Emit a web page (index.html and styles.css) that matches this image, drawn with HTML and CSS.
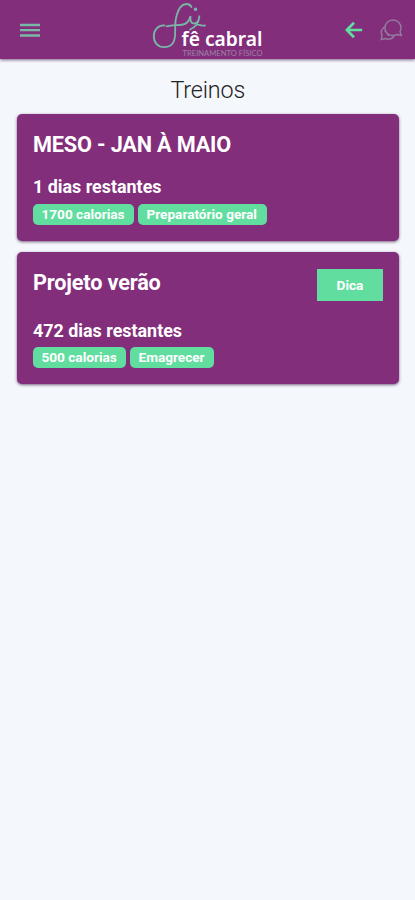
FILE: index.html
```html
<!DOCTYPE html>
<html lang="pt-BR">
<head>
<meta charset="utf-8">
<title>Treinos</title>
<link rel="stylesheet" href="styles.css">
</head>
<body>
<header class="topbar">
  <svg class="menu" viewBox="0 0 20 15"><path d="M0 2h20M0 7.2h20M0 12.5h20"/></svg>
  <svg class="logo" viewBox="0 0 125 59">
    <g class="logo-mark">
      <path d="M24.500 25.500C18 25 13.800 30 13.800 36C13.800 43 18 47.200 24 47.200C31.500 47.200 34.500 43 35 36C35.500 29 34.500 23 36.500 16C38.500 8 41.500 4 46.500 4C49 4 50.500 5 51.500 7"/>
      <path d="M26.500 26.300C32 24.800 38 25.500 43 24.500C48 23.500 49.500 20 50.500 16C50 21 51 23.500 54 23.500C57.500 23.500 59 20 59.500 15.500C59 22 56 27 50 29.500M56 25C59 23.500 61 26.300 65 25.500"/>
      <circle cx="55.500" cy="9.200" r=".9"/>
    </g>
    <text class="logo-name" x="41.500" y="46" textLength="81" lengthAdjust="spacingAndGlyphs">fê cabral</text>
    <text class="logo-tag" x="42.500" y="56.200" textLength="80" lengthAdjust="spacingAndGlyphs">TREINAMENTO FÍSICO</text>
  </svg>
  <div class="actions">
    <svg class="back" viewBox="0 0 18 18"><path d="M17.200 9H2M9 1.800L1.800 9L9 16.200"/></svg>
    <svg class="chat" viewBox="0 0 24 24"><path d="M14 2C9.500 2 6 5.500 6 10C6 14.500 9.500 17.500 14 17.500C15.500 17.500 17 17 18 16.500L22.300 17.500L21 13.500C21.700 12.500 22 11.500 22 10C22 5.500 18.500 2 14 2ZM6 8.500C2.500 11 1.500 14 3 17L2.300 21.500L6.500 20.500C10 22 13.500 20.500 15.500 17.500M5.500 12L10 18"/></svg>
  </div>
</header>
<main>
  <h1>Treinos</h1>
  <section class="card first">
    <h2>MESO - JAN À MAIO</h2>
    <p>1 dias restantes</p>
    <div class="badges"><span class="badge calories-long">1700 calorias</span><span class="badge general">Preparatório geral</span></div>
  </section>
  <section class="card second">
    <div class="card-head"><h2>Projeto verão</h2><button>Dica</button></div>
    <p>472 dias restantes</p>
    <div class="badges"><span class="badge calories-short">500 calorias</span><span class="badge slimming">Emagrecer</span></div>
  </section>
</main>
</body>
</html>
```
FILE: styles.css
```css
* { box-sizing: border-box; }
body {
  margin: 0;
  min-height: 900px;
  background: #f4f7fb;
  font-family: Roboto, sans-serif;
}
.topbar {
  display: grid;
  grid-template-columns: 140px 125px 1fr;
  height: 59px;
  background: #832e7b;
  box-shadow: 0 1px 3px rgba(65, 20, 65, .65);
}
svg { display: block; fill: none; }
.menu {
  width: 20px;
  height: 15px;
  margin: 23px 0 0 20px;
  stroke: #7ab8a6;
  stroke-width: 2.300;
}
.logo { width: 125px; height: 59px; }
.logo-mark { stroke: #79b6a8; stroke-width: 1.800; stroke-linecap: round; }
.logo-name { fill: #fff; font: 600 19.500px "Noto Sans", sans-serif; }
.logo-tag { fill: #9c82a6; font: 400 6.800px Lato, sans-serif; }
.actions {
  display: flex;
  justify-content: flex-end;
  align-items: flex-start;
  gap: 16px;
  padding: 18px 12px 0 0;
}
.back {
  width: 18px;
  height: 18px;
  margin-top: 3px;
  stroke: #61dda0;
  stroke-width: 2.700;
}
.chat { width: 24px; height: 24px; stroke: #947b9f; stroke-width: 1.400; }
main { padding: 17px 16px 0 16.500px; }
h1 {
  margin: 0;
  height: 38px;
  font-size: 23.300px;
  font-weight: 300;
  line-height: 28px;
  letter-spacing: -.15px;
  text-align: center;
  color: #222;
}
.card {
  padding: 16.500px 16px 0 16.500px;
  border-radius: 5px;
  background: #832e7b;
  color: #fff;
  box-shadow: 0 1px 3px rgba(50, 15, 60, .65);
}
.first { height: 127px; margin-bottom: 11px; }
.second { height: 132px; }
.card-head { display: flex; justify-content: space-between; }
h2 {
  margin: 0;
  height: 46px;
  font-size: 21.700px;
  line-height: 28px;
  font-weight: 700;
  letter-spacing: -.17px;
}
.first h2 { height: 45.500px; }
.second h2 { height: 51px; }
p { margin: 0; font-size: 17.900px; line-height: 22px; font-weight: 700; }
.badges { display: flex; gap: 4px; margin-top: 6px; }
.second .badges { margin-top: 5px; }
.badge {
  height: 21px;
  padding-left: 8.500px;
  border-radius: 5px;
  background: #62dda0;
  font-size: 13.600px;
  line-height: 21px;
  font-weight: 700;
  white-space: nowrap;
}
.calories-long { width: 101px; }
.general { width: 129px; }
.calories-short { width: 93px; }
.slimming { width: 84px; }
button {
  width: 66px;
  height: 32px;
  padding: 0;
  border: 0;
  background: #62dda0;
  color: #fff;
  font: 700 13.600px Roboto, sans-serif;
}
```
